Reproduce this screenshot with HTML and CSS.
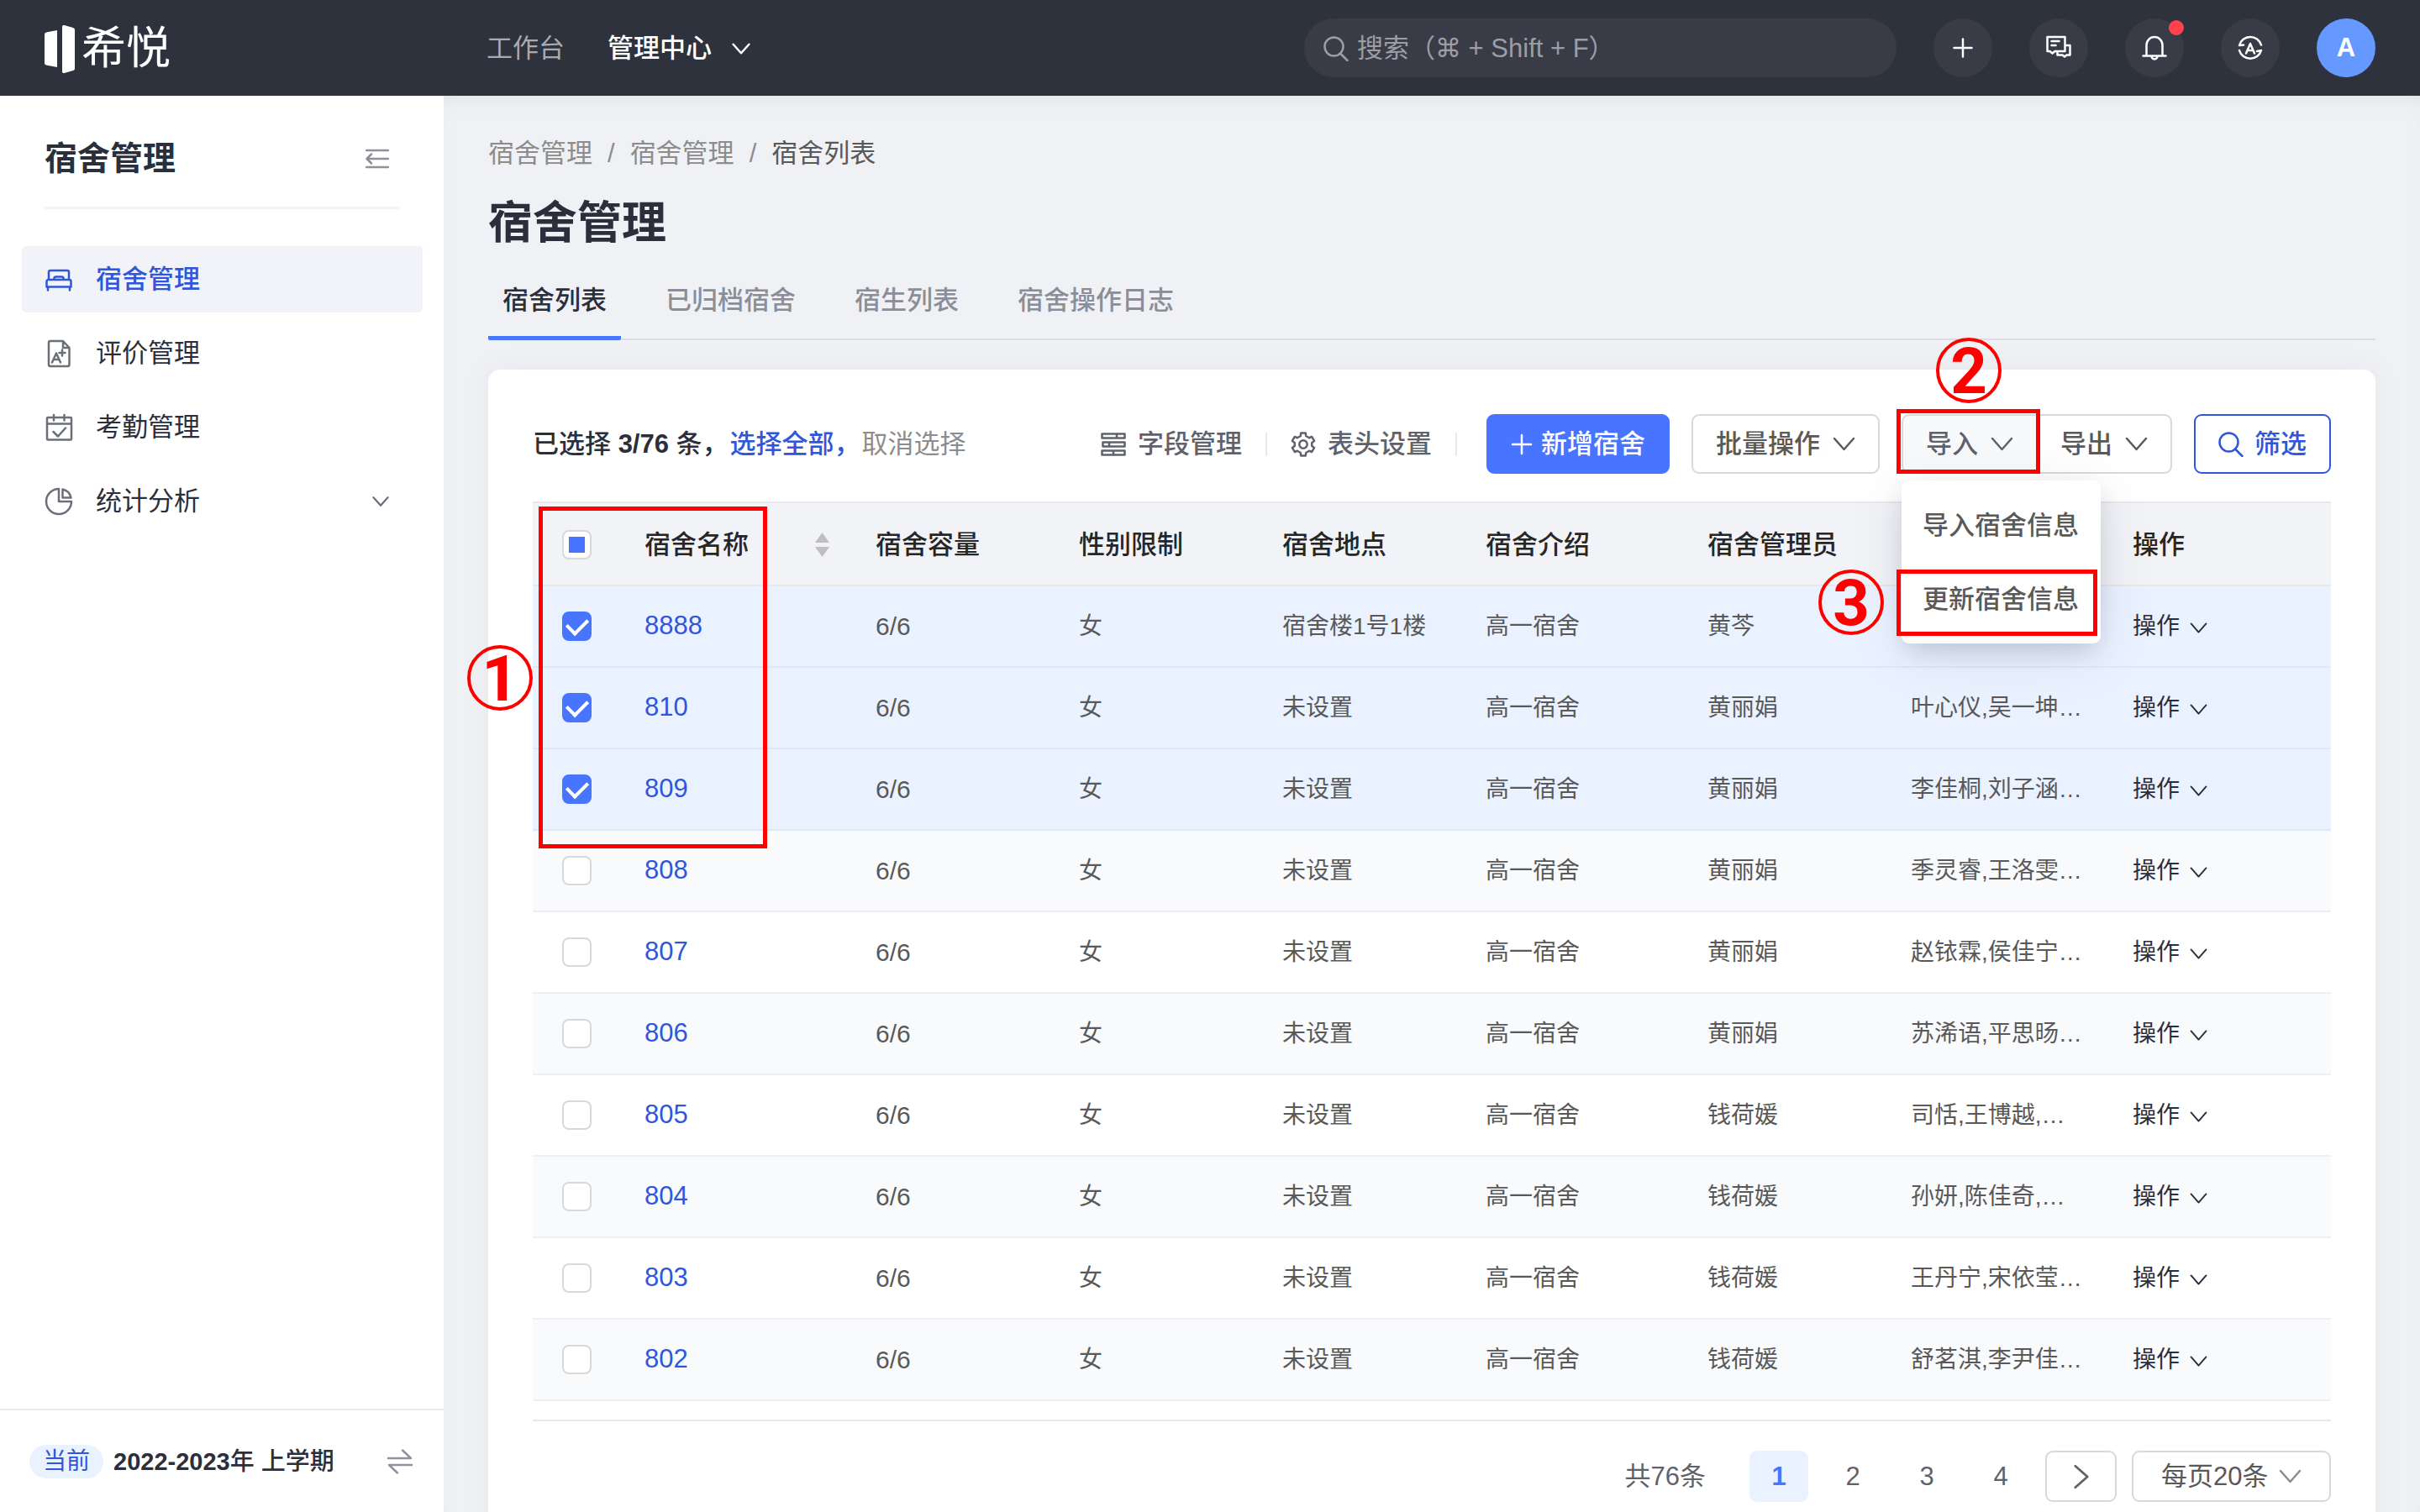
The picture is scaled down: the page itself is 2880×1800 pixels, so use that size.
FILE: index.html
```html
<!DOCTYPE html>
<html lang="zh-CN">
<head>
<meta charset="utf-8">
<title>宿舍管理</title>
<link rel="stylesheet" href="styles.css">
</head>
<body>
<svg class="sprite" aria-hidden="true">
  <symbol id="i-down" viewBox="0 0 27 27"><path d="M2 7l11.500 13L25 7"/></symbol>
  <symbol id="i-search" viewBox="0 0 30 30"><circle cx="12.500" cy="12.500" r="11"/><path d="M20 20.500l8.500 8.500"/></symbol>
  <symbol id="i-plus" viewBox="0 0 26 26"><path d="M13 2v22M2 13h22"/></symbol>
</svg>

<header class="topbar">
  <a class="logo" href="#">
    <svg class="logo-mark" viewBox="0 0 36 57"><path d="M0 11q0-2 2-2.500l13-2.500v44L2 47.500q-2-.5-2-2.500zM21 2q0-2.500 2.500-2L34 3q2 .5 2 2.500v46q0 2-2 2.500l-10.500 3q-2.500.5-2.500-2z"/></svg>
    <span>希悦</span>
  </a>
  <nav class="topnav">
    <a href="#">工作台</a>
    <button type="button" class="topnav-current">管理中心<svg class="icon chev-nav"><use href="#i-down"/></svg></button>
  </nav>
  <div class="topbar-tools">
    <label class="search">
      <svg class="icon icon-search"><use href="#i-search"/></svg>
      <input type="search" placeholder="搜索（⌘ + Shift + F）" aria-label="搜索">
    </label>
    <button type="button" class="round" aria-label="新建"><svg class="icon" viewBox="0 0 30 30"><path d="M15 4.500v21M4.500 15h21"/></svg></button>
    <button type="button" class="round" aria-label="消息"><svg class="icon" viewBox="0 0 30 30"><path d="M1.500 2h21v17h-12l-3 2.500-3-2.500h-3zM6.500 7h9M6.500 12h5M23 12h5.500v11.500h-4l-2.500 2-2.500-2h-6v-4"/></svg></button>
    <button type="button" class="round" aria-label="通知"><svg class="icon" viewBox="0 0 30 30"><path d="M5.500 24V11.500a9.500 9.500 0 0 1 19 0V24M1.500 24.500h27M11.500 25a3.500 3.500 0 0 0 7 0"/></svg><i class="dot"></i></button>
    <button type="button" class="round" aria-label="语言"><svg class="icon" viewBox="0 0 30 30"><path d="M2 12a13.500 13.500 0 0 1 26-.5M2 12l5-.5M28 18a13.500 13.500 0 0 1-26 0M28 18l-5 1M10 21.500l5-11.500 5 11.500M12 18h6"/></svg></button>
    <button type="button" class="round avatar">A</button>
  </div>
</header>

<div class="shell">
  <aside class="sidebar">
    <div class="side-head">
      <h2>宿舍管理</h2>
      <button type="button" class="bare" aria-label="收起"><svg class="icon icon-fold" viewBox="0 0 28 24"><path d="M1 2h26M2 12h25M1 22h26M7 6.500L1.500 12 7 17.500"/></svg></button>
    </div>
    <nav class="side-nav">
      <a class="side-item active" href="#"><svg class="icon" viewBox="0 0 34 34"><path d="M5 17V8a2 2 0 0 1 2-2h20a2 2 0 0 1 2 2v9M11.500 17v-1.500a2 2 0 0 1 2-2h7a2 2 0 0 1 2 2V17M2.500 25.500V19a2 2 0 0 1 2-2h25a2 2 0 0 1 2 2v6.500zM4 26v3.500M30 26v3.500"/></svg>宿舍管理</a>
      <a class="side-item" href="#"><svg class="icon" viewBox="0 0 34 34"><path d="M5 4a2 2 0 0 1 2-2h15l7.500 8v20a2 2 0 0 1-2 2H7a2 2 0 0 1-2-2zM22 2v8h7.500M9 27.500l5-11 5 11M11 24h6.500M21 12.500v7M17.500 16h7"/></svg>评价管理</a>
      <a class="side-item" href="#"><svg class="icon" viewBox="0 0 34 34"><path d="M3 6a1 1 0 0 1 1-1h27a1 1 0 0 1 1 1v24.500a1 1 0 0 1-1 1H4a1 1 0 0 1-1-1zM3 12.500h29M11 2v6.500M23.500 2v6.500M10.500 22l5.500 5.500 9-10"/></svg>考勤管理</a>
      <a class="side-item" href="#"><svg class="icon" viewBox="0 0 34 34"><path d="M17 2a15 15 0 1 0 15 15H17zM21.500 2.500A13 13 0 0 1 31.500 12.500h-10z"/></svg>统计分析<svg class="icon chev-side"><use href="#i-down"/></svg></a>
    </nav>
    <div class="term">
      <span class="pill">当前</span>
      <span class="term-name"><b>2022-2023</b>年 上学期</span>
      <button type="button" class="bare" aria-label="切换学期"><svg class="icon icon-swap" viewBox="0 0 32 30"><path d="M2 11h27L19 1.500M30 19H3l10 9.500"/></svg></button>
    </div>
  </aside>

  <main class="main">
    <nav class="crumbs"><a href="#">宿舍管理</a><span>/</span><a href="#">宿舍管理</a><span>/</span><b>宿舍列表</b></nav>
    <h1>宿舍管理</h1>
    <nav class="tabs">
      <a class="tab active" href="#">宿舍列表</a>
      <a class="tab" href="#">已归档宿舍</a>
      <a class="tab" href="#">宿生列表</a>
      <a class="tab" href="#">宿舍操作日志</a>
    </nav>

    <section class="card">
      <div class="toolbar">
        <div class="selection">
          <span>已选择 <b>3/76</b> 条，</span>
          <button type="button" class="bare select-all">选择全部，</button>
          <button type="button" class="bare select-none">取消选择</button>
        </div>
        <button type="button" class="bare tool"><svg class="icon" viewBox="0 0 30 30"><path d="M1.500 2.500h27v5h-27zM19 2.500v5M2.500 12.500h26v5h-26zM10 12.500v5M1.500 22.500h27v5h-27zM15 22.500v5"/></svg>字段管理</button>
        <i class="rule"></i>
        <button type="button" class="bare tool"><svg class="icon" viewBox="-15 -15 30 30"><path d="M-3.200-10l.4-3.500h5.600l.4 3.500 3.860 2.230 3.140-1.310 2.900 5.040-2.840 2v4l2.840 2-2.900 5.040-3.140-1.230L3.200 10l-.4 3.500h-5.600l-.4-3.500-3.860-2.230-3.140 1.230-2.900-5.040 2.840-2v-4l-2.840-2 2.900-5.040 3.140 1.310z"/><circle r="4.700"/></svg>表头设置</button>
        <i class="rule"></i>
        <div class="actions">
          <button type="button" class="btn primary"><svg class="icon icon-plus"><use href="#i-plus"/></svg>新增宿舍</button>
          <button type="button" class="btn">批量操作<svg class="icon chev"><use href="#i-down"/></svg></button>
          <div class="btn-group">
            <button type="button" class="btn open">导入<svg class="icon chev"><use href="#i-down"/></svg></button>
            <button type="button" class="btn">导出<svg class="icon chev"><use href="#i-down"/></svg></button>
            <div class="menu">
              <button type="button">导入宿舍信息</button>
              <button type="button">更新宿舍信息</button>
              <i class="frame frame-update"></i>
              <span class="step step-3">3</span>
            </div>
            <i class="frame frame-import"></i>
            <span class="step step-2">2</span>
          </div>
          <button type="button" class="btn filter"><svg class="icon icon-search"><use href="#i-search"/></svg>筛选</button>
        </div>
      </div>

      <div class="table-wrap">
        <table>
          <colgroup><col class="c-check"><col class="c-name"><col class="c-cap"><col class="c-cap"><col class="c-cap"><col class="c-intro"><col class="c-cap"><col class="c-intro"><col class="c-op"></colgroup>
          <thead>
            <tr>
              <th><input type="checkbox" class="check partial" aria-label="全选"></th>
              <th><div class="sortable">宿舍名称<svg class="sort" viewBox="0 0 17 29"><path d="M8.500 0L17 12H0zM8.500 29L17 17H0z"/></svg></div></th>
              <th>宿舍容量</th><th>性别限制</th><th>宿舍地点</th><th>宿舍介绍</th><th>宿舍管理员</th><th aria-label="宿生"></th><th>操作</th>
            </tr>
          </thead>
          <tbody>
            <tr class="selected"><td><input type="checkbox" class="check" checked aria-label="8888"></td><td><a href="#">8888</a></td><td class="num">6/6</td><td>女</td><td>宿舍楼1号1楼</td><td>高一宿舍</td><td>黄芩</td><td></td><td><button type="button" class="bare op">操作<svg class="icon"><use href="#i-down"/></svg></button></td></tr>
            <tr class="selected"><td><input type="checkbox" class="check" checked aria-label="810"></td><td><a href="#">810</a></td><td class="num">6/6</td><td>女</td><td>未设置</td><td>高一宿舍</td><td>黄丽娟</td><td>叶心仪,吴一坤…</td><td><button type="button" class="bare op">操作<svg class="icon"><use href="#i-down"/></svg></button></td></tr>
            <tr class="selected"><td><input type="checkbox" class="check" checked aria-label="809"></td><td><a href="#">809</a></td><td class="num">6/6</td><td>女</td><td>未设置</td><td>高一宿舍</td><td>黄丽娟</td><td>李佳桐,刘子涵…</td><td><button type="button" class="bare op">操作<svg class="icon"><use href="#i-down"/></svg></button></td></tr>
            <tr><td><input type="checkbox" class="check" aria-label="808"></td><td><a href="#">808</a></td><td class="num">6/6</td><td>女</td><td>未设置</td><td>高一宿舍</td><td>黄丽娟</td><td>季灵睿,王洛雯…</td><td><button type="button" class="bare op">操作<svg class="icon"><use href="#i-down"/></svg></button></td></tr>
            <tr><td><input type="checkbox" class="check" aria-label="807"></td><td><a href="#">807</a></td><td class="num">6/6</td><td>女</td><td>未设置</td><td>高一宿舍</td><td>黄丽娟</td><td>赵铱霖,侯佳宁…</td><td><button type="button" class="bare op">操作<svg class="icon"><use href="#i-down"/></svg></button></td></tr>
            <tr><td><input type="checkbox" class="check" aria-label="806"></td><td><a href="#">806</a></td><td class="num">6/6</td><td>女</td><td>未设置</td><td>高一宿舍</td><td>黄丽娟</td><td>苏浠语,平思旸…</td><td><button type="button" class="bare op">操作<svg class="icon"><use href="#i-down"/></svg></button></td></tr>
            <tr><td><input type="checkbox" class="check" aria-label="805"></td><td><a href="#">805</a></td><td class="num">6/6</td><td>女</td><td>未设置</td><td>高一宿舍</td><td>钱荷媛</td><td>司恬,王博越,…</td><td><button type="button" class="bare op">操作<svg class="icon"><use href="#i-down"/></svg></button></td></tr>
            <tr><td><input type="checkbox" class="check" aria-label="804"></td><td><a href="#">804</a></td><td class="num">6/6</td><td>女</td><td>未设置</td><td>高一宿舍</td><td>钱荷媛</td><td>孙妍,陈佳奇,…</td><td><button type="button" class="bare op">操作<svg class="icon"><use href="#i-down"/></svg></button></td></tr>
            <tr><td><input type="checkbox" class="check" aria-label="803"></td><td><a href="#">803</a></td><td class="num">6/6</td><td>女</td><td>未设置</td><td>高一宿舍</td><td>钱荷媛</td><td>王丹宁,宋依莹…</td><td><button type="button" class="bare op">操作<svg class="icon"><use href="#i-down"/></svg></button></td></tr>
            <tr><td><input type="checkbox" class="check" aria-label="802"></td><td><a href="#">802</a></td><td class="num">6/6</td><td>女</td><td>未设置</td><td>高一宿舍</td><td>钱荷媛</td><td>舒茗淇,李尹佳…</td><td><button type="button" class="bare op">操作<svg class="icon"><use href="#i-down"/></svg></button></td></tr>
          </tbody>
        </table>
        <i class="frame frame-rows"></i>
        <span class="step step-1">1</span>
      </div>

      <div class="pager">
        <span class="total">共76条</span>
        <button type="button" class="page current">1</button>
        <button type="button" class="page">2</button>
        <button type="button" class="page">3</button>
        <button type="button" class="page">4</button>
        <button type="button" class="page next" aria-label="下一页"><svg class="icon" viewBox="0 0 27 27"><path d="M7 2l13 11.500L7 25"/></svg></button>
        <label class="size">
          <select aria-label="每页条数"><option>每页20条</option></select>
          <svg class="icon chev"><use href="#i-down"/></svg>
        </label>
      </div>
    </section>
  </main>
</div>
</body>
</html>
```
FILE: styles.css
```css
* { box-sizing: border-box; }

body {
  margin: 0;
  height: 100vh;
  display: flex;
  flex-direction: column;
  overflow: hidden;
  font: 31px/44px "Liberation Sans", "Noto Sans CJK SC", sans-serif;
  color: #2b2f3b;
  background: #f0f1f5;
}

button, input, select { font: inherit; color: inherit; margin: 0; }
button { cursor: pointer; white-space: nowrap; }
a { color: inherit; text-decoration: none; }
h1, h2 { margin: 0; font-weight: 700; }

.sprite { position: absolute; width: 0; height: 0; }
.icon {
  flex: none;
  width: 30px;
  height: 30px;
  fill: none;
  stroke: currentColor;
  stroke-width: 2.5;
  stroke-linecap: round;
  stroke-linejoin: round;
}
.icon-plus { width: 26px; height: 26px; }
.bare { display: flex; align-items: center; padding: 0; border: 0; background: none; }

/* Top bar */
.topbar {
  flex: none;
  display: flex;
  align-items: center;
  height: 114px;
  padding: 0 53px;
  color: #fff;
  background: #2e323d;
}
.logo {
  display: flex;
  align-items: center;
  gap: 8px;
  width: 526px;
  padding-top: 2px;
  font-size: 53px;
  font-weight: 400;
}
.logo-mark { width: 36px; height: 57px; fill: #fff; }
.topnav { display: flex; align-items: center; gap: 51px; padding-top: 2px; }
.topnav a { color: #a9abb0; }
.topnav-current {
  display: flex;
  align-items: center;
  gap: 24px;
  padding: 0;
  border: 0;
  background: none;
  font-weight: 500;
}
.chev-nav { width: 22px; height: 22px; stroke-width: 3; }
.topbar-tools { display: flex; gap: 44px; margin-left: auto; }
.search {
  display: flex;
  align-items: center;
  gap: 10px;
  width: 705px;
  height: 70px;
  padding: 2px 23px 0;
  border-radius: 35px;
  color: #9c9ea4;
  background: #393c47;
}
.search input {
  flex: 1;
  min-width: 0;
  padding: 0;
  border: 0;
  outline: 0;
  background: none;
  font-family: "Liberation Sans", "DejaVu Sans", "Noto Sans CJK SC", sans-serif;
}
.search input::placeholder { color: #9c9ea4; opacity: 1; }
.round {
  position: relative;
  display: flex;
  align-items: center;
  justify-content: center;
  width: 70px;
  height: 70px;
  padding: 0;
  border: 0;
  border-radius: 50%;
  background: #393c47;
}
.avatar { background: #6699ff; font-weight: 700; }
.dot {
  position: absolute;
  top: 2px;
  right: 0;
  width: 18px;
  height: 18px;
  border-radius: 50%;
  background: #ff424e;
}

.shell { flex: 1; display: flex; min-height: 0; }

/* Sidebar */
.sidebar {
  flex: none;
  display: flex;
  flex-direction: column;
  width: 528px;
  background: #fff;
}
.side-head {
  display: flex;
  align-items: center;
  justify-content: space-between;
  height: 135px;
  margin: 0 53px;
  padding: 18px 12px 0 0;
  border-bottom: 3px solid #f2f3f5;
}
.side-head h2 { font-size: 39px; }
.side-head .bare { color: #8f9199; }
.icon-fold { width: 28px; height: 24px; }
.side-nav {
  flex: 1;
  display: flex;
  flex-direction: column;
  gap: 9px;
  padding: 44px 25px 0 26px;
}
.side-item {
  display: flex;
  align-items: center;
  gap: 27px;
  height: 79px;
  padding: 1px 40px 0 27px;
  border-radius: 5px;
}
.side-item .icon { width: 34px; height: 34px; color: #6b6f78; }
.side-item .chev-side { width: 20px; height: 20px; margin-left: auto; stroke-width: 3; }
.side-item.active { color: #3056d9; background: #f2f3f8; font-weight: 500; }
.side-item.active .icon { color: #3056d9; }
.term {
  display: flex;
  align-items: center;
  height: 123px;
  padding: 0 36px 0 35px;
  border-top: 2px solid #e9eaeb;
  font-size: 28px;
}
.pill {
  padding: 0 16px;
  border-radius: 20px;
  line-height: 40px;
  color: #3056d9;
  background: #ebf2ff;
}
.term-name { margin-left: 12px; font-size: 29px; font-weight: 500; }
.term .bare { margin-left: auto; color: #8f939e; }
.icon-swap { width: 32px; height: 30px; }

/* Main column */
.main {
  flex: 1;
  min-width: 0;
  padding: 47px 53px 53px;
  overflow: auto;
  scrollbar-width: none;
  box-shadow: inset 0 14px 30px -14px rgba(0, 0, 0, .07);
}
.crumbs { display: flex; gap: 18px; color: #8c8c8c; }
.crumbs b { font-weight: 400; color: #595959; }
h1 { margin-top: 24px; font-size: 53px; line-height: 74px; }
.tabs {
  display: flex;
  gap: 36px;
  height: 102px;
  padding-top: 33px;
  border-bottom: 2px solid #dcdee3;
}
.tab { height: 69px; padding: 0 17px; color: #8b8e96; font-weight: 500; }
.tab.active { color: #2b2f3b; border-bottom: 5px solid #4775ff; border-radius: 2px; }

.card {
  margin-top: 35px;
  padding: 53px;
  border-radius: 14px;
  background: #fff;
  box-shadow: 0 0 36px rgba(40, 50, 80, .05);
}

/* Toolbar */
.toolbar { display: flex; align-items: center; font-weight: 500; white-space: nowrap; }
.selection { display: flex; gap: 2px; margin-right: auto; }
.select-all { color: #3056d9; }
.select-none { color: #8c8c8c; font-weight: 400; }
.tool { gap: 14px; color: #5f626b; font-weight: 500; }
.rule { width: 2px; height: 28px; margin: 0 28px; background: #e6e8eb; }
.actions { display: flex; gap: 26px; margin-left: 7px; }
.btn {
  display: flex;
  align-items: center;
  gap: 15px;
  height: 71px;
  padding: 0 27px;
  border: 2px solid #d9d9d9;
  border-radius: 9px;
  color: #595959;
  background: #fff;
  font-weight: 500;
}
.chev { width: 27px; height: 27px; }
.primary { gap: 10px; border-color: #4775ff; color: #fff; background: #4775ff; }
.filter { gap: 13px; border-color: #3056d9; color: #3056d9; }
.btn-group { position: relative; display: flex; }
.btn-group .btn:first-child { border-radius: 9px 0 0 9px; }
.btn-group .btn:nth-child(2) { margin-left: -2px; border-radius: 0 9px 9px 0; }
.btn.open { color: #5f626b; background: #f8f9fb; }

.menu {
  position: absolute;
  z-index: 2;
  top: 79px;
  left: 0;
  width: 237px;
  padding: 9px 0;
  border-radius: 9px;
  background: #fff;
  box-shadow: 0 12px 30px -6px rgba(20, 30, 60, .18), 0 12px 70px rgba(20, 30, 60, .09);
}
.menu button {
  display: block;
  width: 100%;
  height: 88px;
  padding: 2px 25px 0;
  border: 0;
  background: none;
  color: #595959;
  text-align: left;
}

/* Step callouts */
.frame { position: absolute; z-index: 3; border: 5px solid #f00; pointer-events: none; }
.frame-import { top: -6px; left: -6px; width: 171px; height: 77px; }
.frame-update { top: 106px; left: -6px; width: 239px; height: 79px; }
.frame-rows { top: 6px; left: 7px; width: 272px; height: 407px; }
.step {
  position: absolute;
  z-index: 3;
  width: 78px;
  height: 78px;
  border: 4px solid #f00;
  border-radius: 50%;
  color: #f00;
  font-family: Roboto, sans-serif;
  font-size: 76px;
  font-weight: 700;
  line-height: 72px;
  text-align: center;
}
.step-1 { top: 171px; left: -78px; }
.step-2 { top: -91px; left: 41px; }
.step-3 { top: 106px; left: -99px; }

/* Table */
.table-wrap { position: relative; margin-top: 33px; }
table { width: 100%; table-layout: fixed; border-collapse: separate; border-spacing: 0; }
.c-check { width: 116px; }
.c-name { width: 275px; }
.c-cap { width: 242px; }
.c-intro { width: 264px; }
.c-op { width: 253px; }
th, td { padding: 0 0 0 17px; text-align: left; white-space: nowrap; }
th:first-child, td:first-child { padding-left: 35px; }
th {
  height: 101px;
  padding-top: 2px;
  border-top: 2px solid #e8e8e8;
  border-bottom: 2px solid #e8e8e8;
  color: #262626;
  background: #f2f3f7;
  font-weight: 500;
}
td { height: 97px; border-bottom: 2px solid #efeff1; color: #595959; font-size: 28px; }
td a { color: #3056d9; font-size: 31px; }
td.num { font-size: 30px; }
tbody tr:nth-child(even) td { background: #f9fafc; }
tbody tr.selected td { background: #ebf2ff; border-color: #e1e8f5; }
.sortable { display: flex; align-items: center; justify-content: space-between; padding-right: 38px; }
.sort { width: 17px; height: 29px; fill: #bfbfbf; }
.op { gap: 12px; color: #2b2f3b; }
.op .icon { width: 21px; height: 21px; margin-top: 3px; }

.check {
  display: flex;
  align-items: center;
  justify-content: center;
  width: 35px;
  height: 35px;
  appearance: none;
  border: 2px solid #d9d9d9;
  border-radius: 8px;
  background: #fff;
}
.check:checked { border-color: #4775ff; background: #4775ff; }
.check:checked::after {
  content: "";
  width: 12px;
  height: 20px;
  margin-bottom: 5px;
  border: solid #fff;
  border-width: 0 4px 4px 0;
  transform: rotate(45deg);
}
.check.partial::after { content: ""; width: 19px; height: 19px; background: #4775ff; }

/* Pagination */
.pager {
  display: flex;
  align-items: center;
  justify-content: flex-end;
  gap: 18px;
  margin-top: 22px;
  padding-top: 35px;
  border-top: 2px solid #e6e8eb;
  color: #5f626b;
}
.total { margin-right: 34px; }
.page {
  width: 70px;
  height: 61px;
  padding: 0;
  border: 0;
  border-radius: 9px;
  background: none;
}
.page.current { color: #4775ff; background: #ebf2ff; font-weight: 700; }
.page.next {
  display: flex;
  align-items: center;
  justify-content: center;
  width: 85px;
  border: 2px solid #d9d9d9;
}
.size { position: relative; }
.size select {
  display: block;
  width: 237px;
  height: 61px;
  padding: 0 33px;
  border: 2px solid #d9d9d9;
  border-radius: 9px;
  appearance: none;
  color: #595959;
  background: #fff;
}
.size .chev { position: absolute; top: 17px; right: 35px; color: #8c8c8c; pointer-events: none; }
```
